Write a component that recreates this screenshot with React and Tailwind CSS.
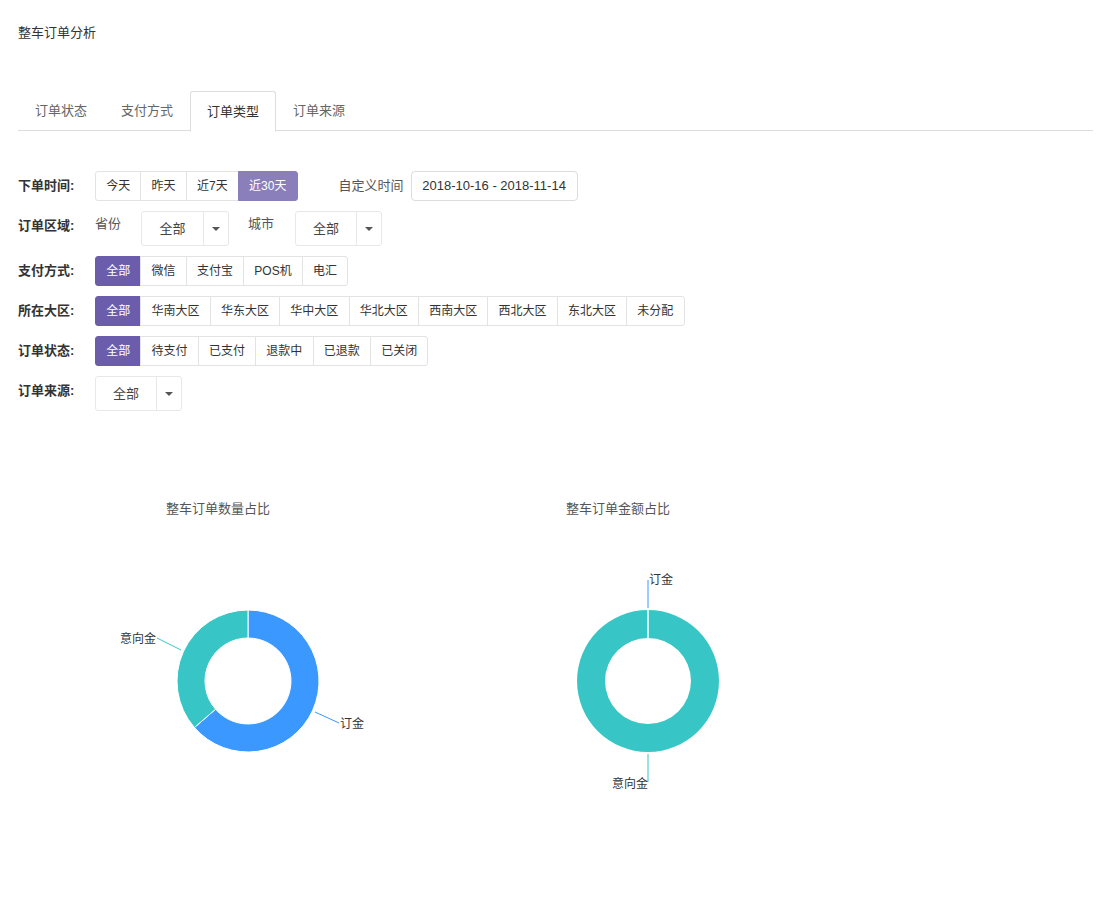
import React from "react";

const FONT = { fontFamily: '"Liberation Sans", "Noto Sans CJK SC", sans-serif' };

function ButtonGroup({ items, active, light }) {
  return (
    <div className="flex h-[30px]">
      {items.map((t, i) => {
        const isActive = i === active;
        return (
          <div
            key={t}
            className={
              "flex items-center justify-center px-[10.2px] text-[12px] border " +
              (i === 0 ? "rounded-l-[3px] " : "") +
              (i === items.length - 1 ? "rounded-r-[3px] " : "") +
              (i > 0 ? "-ml-px " : "") +
              (isActive
                ? light
                  ? "bg-[#8a7fbb] border-[#8a7fbb] text-white"
                  : "bg-[#6b5dab] border-[#6b5dab] text-white"
                : "bg-white border-[#e3e3e3] text-[#333]")
            }
          >
            {t}
          </div>
        );
      })}
    </div>
  );
}

function Select({ w }) {
  return (
    <div className={"flex h-[35px] border border-[#e8e8e8] rounded-[3px] bg-white " + w}>
      <div className="flex-1 flex items-center justify-center text-[13px] text-[#444]">全部</div>
      <div className="w-[25px] border-l border-[#e8e8e8] flex items-center justify-center">
        <div className="w-0 h-0 border-l-[4px] border-r-[4px] border-t-[4px] border-l-transparent border-r-transparent border-t-[#555]" />
      </div>
    </div>
  );
}

function Row({ label, children }) {
  return (
    <div className="flex items-start">
      <div className="w-[77px] h-[30px] leading-[30px] text-[13px] font-bold text-[#333]">{label}</div>
      {children}
    </div>
  );
}

function pt(cx, cy, r, deg) {
  const a = (deg * Math.PI) / 180;
  return [cx + r * Math.sin(a), cy - r * Math.cos(a)];
}

function arc(cx, cy, r0, r1, a0, a1) {
  const large = a1 - a0 > 180 ? 1 : 0;
  const [x0, y0] = pt(cx, cy, r1, a0);
  const [x1, y1] = pt(cx, cy, r1, a1);
  const [x2, y2] = pt(cx, cy, r0, a1);
  const [x3, y3] = pt(cx, cy, r0, a0);
  return `M${x0} ${y0} A${r1} ${r1} 0 ${large} 1 ${x1} ${y1} L${x2} ${y2} A${r0} ${r0} 0 ${large} 0 ${x3} ${y3} Z`;
}

const BLUE = "#3a98ff";
const TEAL = "#37c6c5";

function Chart1() {
  const cx = 230, cy = 201;
  const split = 229;
  return (
    <svg width="400" height="360" className="absolute left-0 top-0">
      <path d={arc(cx, cy, 43, 71, 0, split)} fill={BLUE} stroke="#fff" strokeWidth="1" />
      <path d={arc(cx, cy, 43, 71, split, 360)} fill={TEAL} stroke="#fff" strokeWidth="1" />
      <polyline points="297,232 321,243" fill="none" stroke={BLUE} strokeWidth="1" />
      <text x="322" y="247.5" fontSize="12" fill="#333" style={FONT}>订金</text>
      <polyline points="163,170 139,158" fill="none" stroke={TEAL} strokeWidth="1" />
      <text x="138" y="162.5" fontSize="12" fill="#333" textAnchor="end" style={FONT}>意向金</text>
    </svg>
  );
}

function Chart2() {
  const cx = 230, cy = 201;
  return (
    <svg width="400" height="360" className="absolute left-0 top-0">
      <path d={arc(cx, cy, 43, 71, 0, 180)} fill={TEAL} />
      <path d={arc(cx, cy, 43, 71, 180, 360)} fill={TEAL} />
      <line x1={cx} y1={cy - 72} x2={cx} y2={cy - 42} stroke="#fff" strokeWidth="1.5" />
      <polyline points="230,128 230,100" fill="none" stroke={BLUE} strokeWidth="1" />
      <text x="231" y="103.5" fontSize="12" fill="#333" style={FONT}>订金</text>
      <polyline points="230,274 230,302" fill="none" stroke={TEAL} strokeWidth="1" />
      <text x="230" y="307.5" fontSize="12" fill="#333" textAnchor="end" style={FONT}>意向金</text>
    </svg>
  );
}

export default function App() {
  const tabs = ["订单状态", "支付方式", "订单类型", "订单来源"];
  return (
    <div className="w-[1109px] h-[919px] bg-white px-[18px] pt-[24px] text-[#333]" style={FONT}>
      <div className="text-[13px] leading-[18px] text-[#333]">整车订单分析</div>

      <div className="mt-[49px] flex border-b border-[#dddddd] h-[40px] w-[1075px]">
        {tabs.map((t, i) => (
          <div
            key={t}
            className={
              "h-[40px] px-[16px] flex items-center text-[13px] " +
              (i === 2
                ? "border border-[#dddddd] border-b-white rounded-t-[3px] bg-white text-[#333] mb-[-1px] h-[41px]"
                : "border border-transparent text-[#666]")
            }
          >
            {t}
          </div>
        ))}
      </div>

      <div className="mt-[40px] flex flex-col gap-[10px]">
        <Row label="下单时间:">
          <ButtonGroup items={["今天", "昨天", "近7天", "近30天"]} active={3} light />
          <div className="ml-[41px] h-[30px] flex items-center text-[13px] text-[#555]">自定义时间</div>
          <div className="ml-[7px] h-[30px] w-[167px] border border-[#dcdcdc] rounded-[4px] flex items-center justify-center text-[13px] text-[#333]">
            2018-10-16 - 2018-11-14
          </div>
        </Row>
        <Row label="订单区域:">
          <div className="h-[30px] leading-[26px] text-[13px] text-[#555] w-[46px]">省份</div>
          <Select w="w-[88px]" />
          <div className="h-[30px] leading-[26px] text-[13px] text-[#555] ml-[19px] w-[47px]">城市</div>
          <Select w="w-[87px]" />
        </Row>
        <Row label="支付方式:">
          <ButtonGroup items={["全部", "微信", "支付宝", "POS机", "电汇"]} active={0} />
        </Row>
        <Row label="所在大区:">
          <ButtonGroup
            items={["全部", "华南大区", "华东大区", "华中大区", "华北大区", "西南大区", "西北大区", "东北大区", "未分配"]}
            active={0}
          />
        </Row>
        <Row label="订单状态:">
          <ButtonGroup items={["全部", "待支付", "已支付", "退款中", "已退款", "已关闭"]} active={0} />
        </Row>
        <Row label="订单来源:">
          <Select w="w-[87px]" />
        </Row>
      </div>

      <div className="mt-[69px] flex">
        <div className="relative w-[400px] h-[360px]">
          <Chart1 />
          <div className="relative pt-[20px] text-center text-[13px] leading-[18px] text-[#555]">整车订单数量占比</div>
        </div>
        <div className="relative w-[400px] h-[360px]">
          <Chart2 />
          <div className="relative pt-[20px] text-center text-[13px] leading-[18px] text-[#555]">整车订单金额占比</div>
        </div>
      </div>
    </div>
  );
}
